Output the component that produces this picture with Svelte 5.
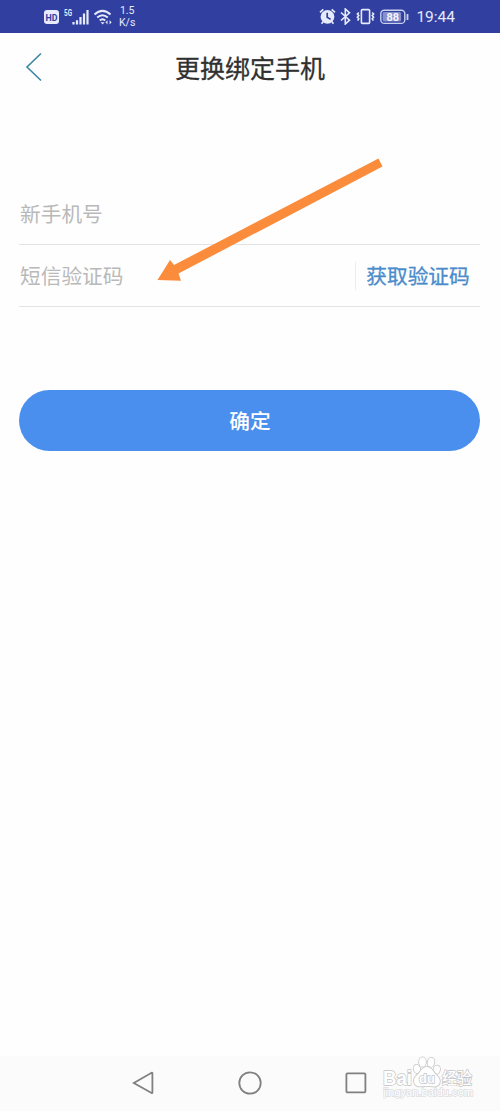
<script lang="ts">
  let phone = $state('');
  let code = $state('');
</script>

<div class="screen">
  <header class="status-bar">
    <div class="status-left">
      <svg class="hd" width="15" height="14" viewBox="0 0 15 14">
        <rect width="15" height="14" rx="3" fill="#e6eafa" />
        <text x="7.5" y="10.5" text-anchor="middle" textLength="12" lengthAdjust="spacingAndGlyphs">HD</text>
      </svg>
      <svg class="signal" width="26" height="18" viewBox="0 0 26 18">
        <text x="0" y="7.6" textLength="8" lengthAdjust="spacingAndGlyphs">5G</text>
        <path d="M9.5 14v2.5M13 12.2v4.3M16.5 9v7.5M20 5.5v11M23.5 2v14.500" />
      </svg>
      <svg class="wifi" width="20" height="18" viewBox="0 0 20 18">
        <path d="M1.500 6.500Q9.500-.7 17.500 6.500M4.200 9.600Q9.500 4.800 14.800 9.600M6.800 12.500Q9.500 10 12.200 12.500" />
        <path class="fill" d="M7.600 14.200h4l-2 2.300zM12.500 14.300l2-2.100v4.200zM18.600 14.300l-2-2.100v4.200z" />
      </svg>
      <div class="speed">
        <span>1.5</span>
        <span>K/s</span>
      </div>
    </div>
    <div class="status-right">
      <svg class="alarm" width="17" height="17" viewBox="0 0 17 17">
        <circle cx="8.5" cy="8.8" r="6.9" fill="#e6eafa" />
        <path d="M1 4.300L4.300 1.300M16 4.300L12.700 1.300M4 13.800L2.600 15.800M13 13.800l1.400 2" stroke="#e6eafa" />
        <path d="M8.200 4.800v4.400l3.400 2.200" stroke="#3140a0" />
      </svg>
      <svg class="bluetooth" width="11" height="17" viewBox="0 0 11 17">
        <path d="M1 4.500L9.500 12.200 5.300 16V1L9.500 4.800 1 12.500" />
      </svg>
      <svg class="vibrate" width="19" height="17" viewBox="0 0 19 17">
        <rect x="5.4" y="1.6" width="8.2" height="13.800" rx="1" />
        <path d="M2.800 4.500L1.400 6l1.400 1.600-1.400 1.600 1.400 1.600-1.200 1.800M16.200 4.500L17.600 6l-1.400 1.600 1.400 1.600-1.400 1.600 1.200 1.800" />
      </svg>
      <svg class="battery" width="29" height="16" viewBox="0 0 29 16">
        <rect x=".8" y="1.2" width="24" height="13.2" rx="3.5" fill="none" stroke="#c8cfef" stroke-width="1.4" />
        <rect x="2.6" y="3" width="18.5" height="9.6" rx="1.6" fill="#8790cc" />
        <text x="12.8" y="11.9" text-anchor="middle">88</text>
        <path d="M27.500 5v6" stroke="#c8cfef" stroke-width="1.800" />
      </svg>
      <span class="time">19:44</span>
    </div>
  </header>

  <div class="title-bar">
    <button type="button" class="back" aria-label="返回">
      <svg width="18" height="30" viewBox="0 0 18 30">
        <path d="M16 1.500L2 15l14 13.500" />
      </svg>
    </button>
    <h1>更换绑定手机</h1>
  </div>

  <form onsubmit={(e) => e.preventDefault()}>
    <div class="field">
      <input type="tel" placeholder="新手机号" bind:value={phone} />
    </div>
    <div class="field">
      <input type="text" placeholder="短信验证码" bind:value={code} />
      <button type="button" class="get-code">获取验证码</button>
    </div>
    <button type="submit" class="submit">确定</button>
  </form>

  <svg class="arrow" width="226" height="126" viewBox="0 0 226 126">
    <path d="M221.500 .5L225.500 8.500 21.500 115.500 24 122.800 .5 122 13 102 17 107z" />
  </svg>

  <nav class="nav-bar">
    <svg width="22" height="24" viewBox="0 0 22 24">
      <path d="M1.800 12L19.600 1.800q.8-.3.8.6V21.400q0 1-.8.6z" />
    </svg>
    <svg width="24" height="24" viewBox="0 0 24 24">
      <circle cx="12" cy="12" r="10.7" />
    </svg>
    <svg width="22" height="24" viewBox="0 0 22 24">
      <rect x="1.4" y="2.3" width="19" height="19" rx="1" />
    </svg>
  </nav>

  <svg class="watermark" width="92" height="46" viewBox="0 0 92 46">
    <text class="brand" x="0" y="29" textLength="29" lengthAdjust="spacingAndGlyphs">Bai</text>
    <g class="paw">
      <ellipse cx="34" cy="13" rx="3.2" ry="4.3" transform="rotate(-18 34 13)" />
      <ellipse cx="39.5" cy="6" rx="3.4" ry="4.7" />
      <ellipse cx="48" cy="6.3" rx="3.3" ry="4.6" transform="rotate(12 48 6.3)" />
      <ellipse cx="53.7" cy="13.8" rx="3.2" ry="4.2" transform="rotate(18 53.7 13.8)" />
      <path d="M43.800 11C38.500 11 37.500 16.500 33.500 19.500 28 25 32 31 37.500 30.500q6.500-1 13 0C56.500 31 59.500 25 54 19.500 50 16.500 49.500 11 43.800 11z" />
    </g>
    <text class="du" x="44" y="27" text-anchor="middle">du</text>
    <text class="exp" x="59" y="28" textLength="30" lengthAdjust="spacingAndGlyphs">经验</text>
    <text class="url" x="0" y="40" textLength="90" lengthAdjust="spacingAndGlyphs">jingyan.baidu.com</text>
  </svg>
</div>

<style>
  :global(body) {
    margin: 0;
    background: #fff;
  }

  .screen {
    position: relative;
    display: flex;
    flex-direction: column;
    width: 500px;
    height: 1111px;
    overflow: hidden;
    background: #fefefe;
    font-family: "KaiTi", "STKaiti", "Noto Sans CJK SC", sans-serif;
  }

  .status-bar {
    display: flex;
    justify-content: space-between;
    box-sizing: border-box;
    height: 33px;
    padding: 0 44px;
    background: #3140a0;
    color: #e6eafa;
    font-family: Roboto, sans-serif;
  }

  .status-left,
  .status-right {
    display: flex;
    align-items: center;
  }

  .hd {
    margin-top: 1px;
  }

  .hd text {
    font-size: 9.5px;
    font-weight: 700;
    fill: #3140a0;
  }

  .signal {
    margin-left: 5px;
  }

  .signal text {
    font-size: 9px;
    font-weight: 700;
    fill: #e6eafa;
  }

  .signal path {
    fill: none;
    stroke: #e6eafa;
    stroke-width: 2.2;
  }

  .wifi {
    margin-left: 3px;
  }

  .wifi path {
    fill: none;
    stroke: #e6eafa;
    stroke-width: 2;
  }

  .wifi .fill {
    fill: #e6eafa;
    stroke: none;
  }

  .speed {
    display: flex;
    flex-direction: column;
    align-items: center;
    margin-left: 6px;
    font-size: 10.5px;
    line-height: 12px;
  }

  .status-right {
    margin-right: 1px;
  }

  .alarm path {
    fill: none;
    stroke-width: 1.7;
  }

  .bluetooth {
    margin-left: 4px;
  }

  .bluetooth path,
  .vibrate rect,
  .vibrate path {
    fill: none;
    stroke: #e6eafa;
    stroke-width: 1.6;
  }

  .vibrate {
    margin-left: 5px;
  }

  .battery {
    margin-left: 5px;
  }

  .battery text {
    font-size: 11px;
    font-weight: 700;
    fill: #f4f6ff;
  }

  .time {
    margin: 1px 0 0 7px;
    font-size: 15.5px;
  }

  .title-bar {
    display: grid;
    grid-template-columns: 60px 1fr 60px;
    align-items: center;
    height: 68px;
  }

  button {
    padding: 0;
    border: none;
    background: none;
    font-family: inherit;
    cursor: pointer;
  }

  .back {
    display: flex;
    padding-left: 25px;
  }

  .back path {
    fill: none;
    stroke: #3b87a6;
    stroke-width: 1.6;
  }

  h1 {
    margin: 0;
    color: #303030;
    font-size: 25px;
    font-weight: 400;
    line-height: 36px;
    text-align: center;
    -webkit-text-stroke: 0.3px #303030;
  }

  form {
    display: flex;
    flex-direction: column;
    flex: 1;
    padding: 83px 20px 0 19px;
  }

  .field {
    display: flex;
    align-items: center;
    box-sizing: border-box;
    height: 61px;
    border-bottom: 1px solid #e3e3e3;
  }

  .field + .field {
    height: 62px;
  }

  input {
    flex: 1;
    min-width: 0;
    padding: 0 0 2px 1px;
    border: none;
    outline: none;
    background: none;
    color: #333;
    font-family: inherit;
    font-size: 20.7px;
  }

  input::placeholder {
    color: #b9b9b9;
    opacity: 1;
  }

  .get-code {
    width: 125px;
    height: 28px;
    padding-bottom: 2px;
    border-left: 1px solid #ededed;
    color: #4a8ccb;
    font-size: 20.7px;
    line-height: 26px;
    -webkit-text-stroke: 0.3px #4a8ccb;
  }

  .submit {
    height: 61px;
    margin-top: 83px;
    padding: 0 0 2px 1px;
    border-radius: 31px;
    background: #4a8fee;
    color: #fff;
    font-size: 20.7px;
    font-weight: 500;
  }

  .arrow {
    position: absolute;
    left: 157px;
    top: 158px;
    pointer-events: none;
  }

  .arrow path {
    fill: #fa8c3c;
  }

  .nav-bar {
    display: flex;
    align-items: center;
    justify-content: space-between;
    box-sizing: border-box;
    height: 55px;
    padding: 0 133px 1px 132px;
    background: #fbfbfb;
  }

  .nav-bar path,
  .nav-bar circle,
  .nav-bar rect {
    fill: none;
    stroke: #808080;
    stroke-width: 1.8;
  }

  .watermark {
    position: absolute;
    left: 383px;
    top: 1056px;
    font-family: "Liberation Sans", "Noto Sans CJK SC", sans-serif;
  }

  .watermark text,
  .paw {
    fill: #fff;
    stroke: #c4c4c4;
    stroke-width: 1.4;
    paint-order: stroke;
  }

  .paw {
    stroke-width: 1.6;
  }

  .watermark .brand {
    font-size: 20px;
    font-weight: 700;
  }

  .watermark .du {
    font-size: 13px;
    font-weight: 700;
  }

  .watermark .exp {
    font-size: 16px;
    font-weight: 500;
  }

  .watermark .url {
    font-size: 10px;
    stroke: #dedede;
  }
</style>
